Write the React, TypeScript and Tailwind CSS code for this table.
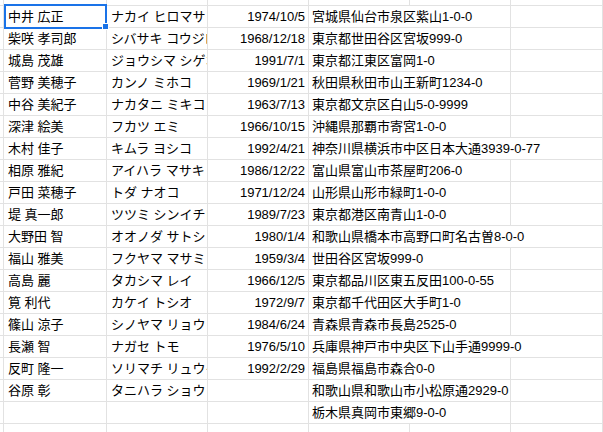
const rows: [string, string, string, string, number][] = [
  ["中井 広正", "ナカイ ヒロマサ", "1974/10/5", "宮城県仙台市泉区紫山1-0-0", 2],
  ["柴咲 孝司郎", "シバサキ コウジロウ", "1968/12/18", "東京都世田谷区宮坂999-0", 2],
  ["城島 茂雄", "ジョウシマ シゲオ", "1991/7/1", "東京都江東区富岡1-0", 2],
  ["菅野 美穂子", "カンノ ミホコ", "1969/1/21", "秋田県秋田市山王新町1234-0", 2],
  ["中谷 美紀子", "ナカタニ ミキコ", "1963/7/13", "東京都文京区白山5-0-9999", 2],
  ["深津 絵美", "フカツ エミ", "1966/10/15", "沖縄県那覇市寄宮1-0-0", 2],
  ["木村 佳子", "キムラ ヨシコ", "1992/4/21", "神奈川県横浜市中区日本大通3939-0-77", 3],
  ["相原 雅紀", "アイハラ マサキ", "1986/12/22", "富山県富山市茶屋町206-0", 2],
  ["戸田 菜穂子", "トダ ナオコ", "1971/12/24", "山形県山形市緑町1-0-0", 2],
  ["堤 真一郎", "ツツミ シンイチロウ", "1989/7/23", "東京都港区南青山1-0-0", 2],
  ["大野田 智", "オオノダ サトシ", "1980/1/4", "和歌山県橋本市高野口町名古曽8-0-0", 3],
  ["福山 雅美", "フクヤマ マサミ", "1959/3/4", "世田谷区宮坂999-0", 2],
  ["高島 麗", "タカシマ レイ", "1966/12/5", "東京都品川区東五反田100-0-55", 2],
  ["筧 利代", "カケイ トシオ", "1972/9/7", "東京都千代田区大手町1-0", 2],
  ["篠山 涼子", "シノヤマ リョウコ", "1984/6/24", "青森県青森市長島2525-0", 2],
  ["長瀬 智", "ナガセ トモ", "1976/5/10", "兵庫県神戸市中央区下山手通9999-0", 3],
  ["反町 隆一", "ソリマチ リュウイチ", "1992/2/29", "福島県福島市森合0-0", 2],
  ["谷原 彰", "タニハラ ショウ", "", "和歌山県和歌山市小松原通2929-0", 2],
  ["", "", "", "栃木県真岡市東郷9-0-0", 2],
];

const cell = "flex items-center overflow-hidden whitespace-nowrap border-r border-[#e2e2e2]";

function Row({ r, h = "h-[22px]" }: { r?: [string, string, string, string, number]; h?: string }) {
  const span = r ? r[4] : 1;
  return (
    <div className={`flex ${h} border-b border-[#e2e2e2] pl-[3px]`}>
      <div className={`${cell} w-[104px] shrink-0 border-l px-[4px]`}>{r?.[0]}</div>
      <div className={`${cell} w-[101px] shrink-0 px-[4px]`}>{r?.[1]}</div>
      <div className={`${cell} w-[101px] shrink-0 justify-end px-[3px]`}>{r?.[2]}</div>
      {span === 3 ? (
        <div className={`${cell} flex-1 px-[3px]`}>{r?.[3]}</div>
      ) : (
        <>
          {span === 2 ? (
            <div className={`${cell} w-[202px] shrink-0 px-[3px]`}>{r?.[3]}</div>
          ) : (
            <>
              <div className={`${cell} w-[101px] shrink-0`} />
              <div className={`${cell} w-[101px] shrink-0`} />
            </>
          )}
          <div className={`${cell} flex-1`} />
        </>
      )}
    </div>
  );
}

export default function App() {
  return (
    <div className="relative h-[432px] w-[603px] overflow-hidden bg-white font-['Liberation_Sans','Noto_Sans_CJK_JP',sans-serif] text-[13px] leading-none text-black">
      <Row h="h-[6px]" />
      {rows.map((r, i) => (
        <Row key={i} r={r} />
      ))}
      <Row />
      <div className="absolute left-[4px] top-[4px] h-[25px] w-[103px] border-2 border-[#1a73e8]" />
      <div className="absolute left-[102px] top-[23px] h-[7px] w-[7px] border border-white bg-[#1a73e8]" />
    </div>
  );
}
